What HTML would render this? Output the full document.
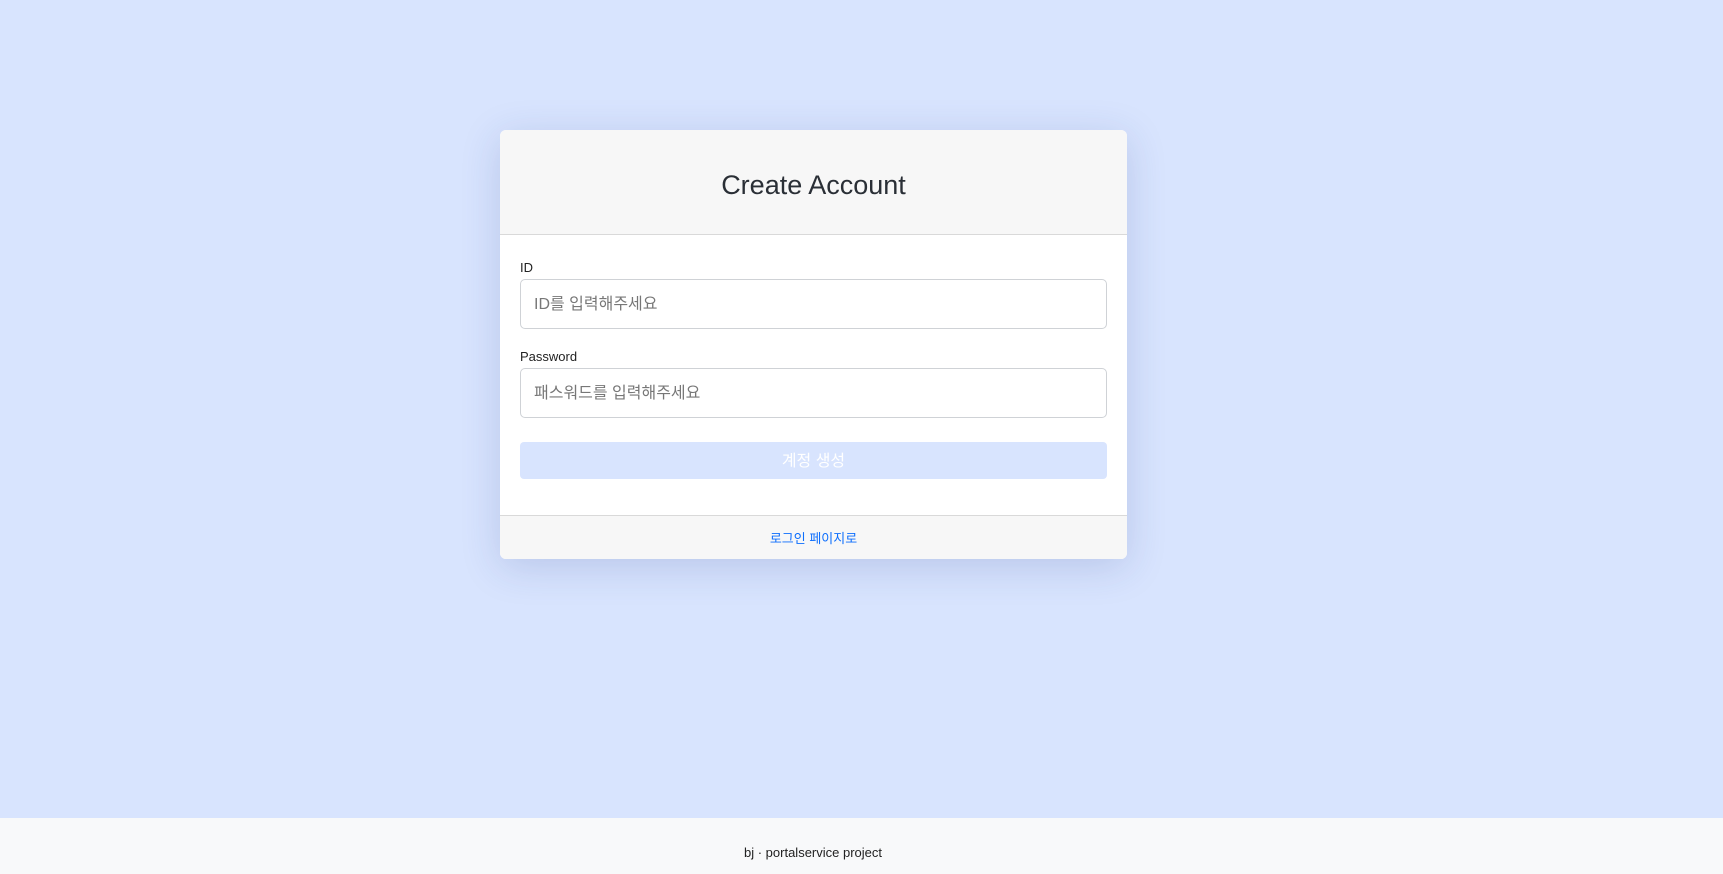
<!DOCTYPE html>
<html><head><meta charset="utf-8"><style>
*{box-sizing:border-box;margin:0;padding:0}
body{width:1723px;height:874px;background:#d8e4fe;font-family:"Liberation Sans","Noto Sans CJK KR",sans-serif;position:relative;overflow:hidden}
.card{position:absolute;left:500px;top:130px;width:627px;height:429px;background:#fff;border-radius:6px;box-shadow:0 8px 40px rgba(40,60,140,.18);overflow:hidden}
.hd{height:105px;background:#f7f7f7;border-bottom:1px solid #d9d9d9;text-align:center;font-size:27px;font-weight:300;color:#2a2f36;line-height:110px}
.lbl{position:absolute;left:20px;font-size:13px;color:#222}
.inp{position:absolute;left:20px;width:587px;height:50px;border:1px solid #cfd2d6;border-radius:5px;font-size:16px;color:#777;padding-left:13px;line-height:50px}
.btn{position:absolute;left:20px;top:312px;width:587px;height:37px;background:#d8e4fe;border-radius:4px;color:#fff;font-size:16px;text-align:center;line-height:39px}
.ft{position:absolute;left:0;top:385px;width:627px;height:44px;background:#f7f7f7;border-top:1px solid #d9d9d9;text-align:center;line-height:45px;font-size:13px;color:#0d6efd}
.pf{position:absolute;left:0;top:818px;width:1723px;height:56px;background:#f8f9fa}
.pf span{position:absolute;left:0;width:1626px;text-align:center;top:27px;font-size:13px;color:#222}
</style></head><body>
<div class="card">
<div class="hd">Create Account</div>
<div class="lbl" style="top:130px">ID</div>
<div class="inp" style="top:149px">ID를 입력해주세요</div>
<div class="lbl" style="top:219px">Password</div>
<div class="inp" style="top:238px">패스워드를 입력해주세요</div>
<div class="btn">계정 생성</div>
<div class="ft">로그인 페이지로</div>
</div>
<div class="pf"><span>bj · portalservice project</span></div>
</body></html>
